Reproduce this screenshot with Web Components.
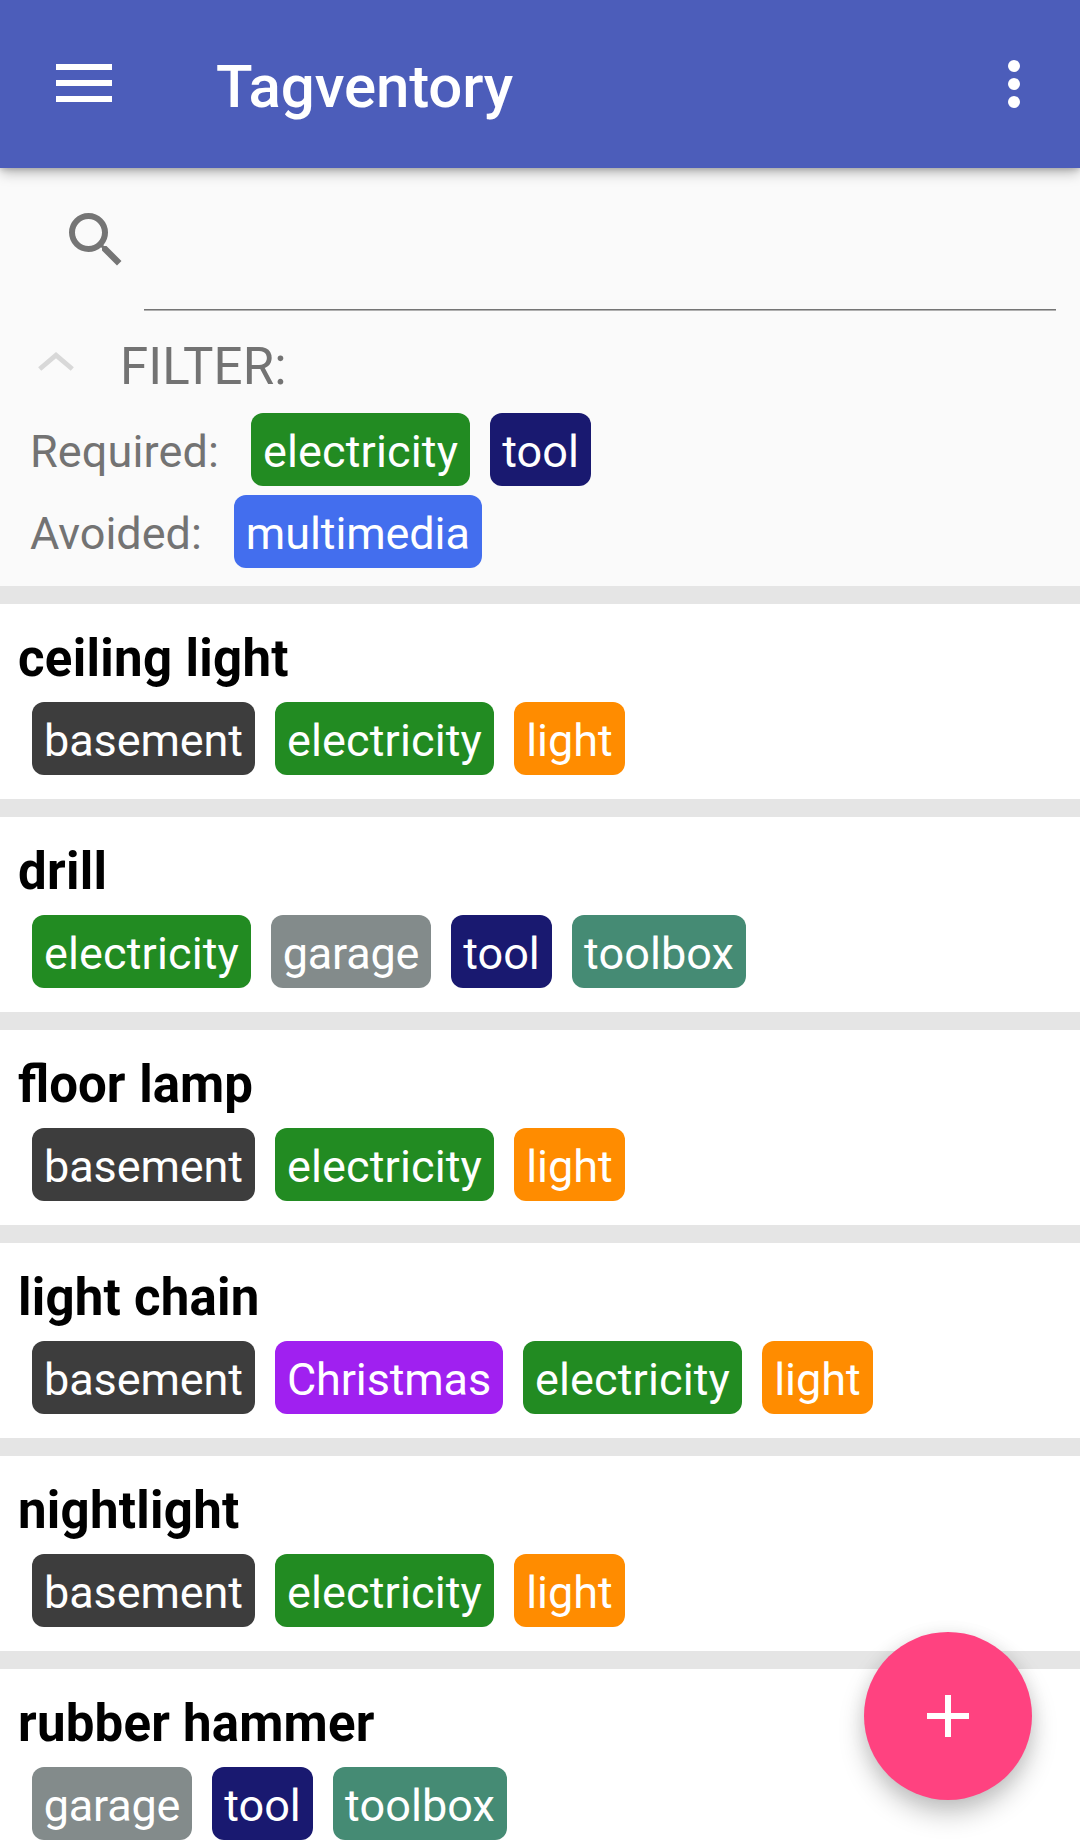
<!DOCTYPE html>
<html lang="en">
<head>
<meta charset="utf-8">
<title>Tagventory</title>
<style>
html, body { margin: 0; height: 1848px; overflow: hidden; background: #fafafa; }
body { font-family: Roboto, "Noto Sans", sans-serif; }
</style>
</head>
<body>
<tag-inventory></tag-inventory>
<script>
const define = (name, html, setup) => {
  const template = document.createElement('template');
  template.innerHTML = html;
  customElements.define(name, class extends HTMLElement {
    constructor() {
      super();
      this.attachShadow({ mode: 'open' }).append(template.content.cloneNode(true));
    }
    connectedCallback() { if (setup) setup(this, this.shadowRoot); }
  });
};

// tag name: [colour, chip width, letter spacing]
const TAGS = {
  electricity: ['#228b22', 219, .12],
  tool: ['#191970', 101, 0],
  multimedia: ['#436eee', 248, -.1],
  basement: ['#3d3d3d', 223, -.12],
  light: ['#ff8c00', 111, 0],
  garage: ['#838b8b', 160, -.2],
  toolbox: ['#458b74', 174, .08],
  Christmas: ['#a020f0', 228, -.15]
};

define('tag-chip', `
<style>
:host { display: flex; justify-content: center; flex: none; box-sizing: border-box; height: 73px; border-radius: 12px;
  color: #fff; font-size: 45px; line-height: 77px; white-space: nowrap; }
</style>
<slot></slot>`, host => {
  const [color, width, spacing] = TAGS[host.textContent.trim()];
  host.style.background = color;
  host.style.width = width + 'px';
  host.style.letterSpacing = spacing + 'px';
});

define('app-bar', `
<style>
:host { display: flex; align-items: center; box-sizing: border-box; flex: none; height: 168px; padding: 0 48px;
  background: #4c5dba; color: #fff; position: relative; z-index: 1;
  box-shadow: 0 6px 12px -1px rgba(0,0,0,.26), 0 1px 6px rgba(0,0,0,.2); }
svg { display: block; flex: none; fill: #fff; }
h1 { flex: 1; margin: 0 0 0 96px; padding-top: 5px; font-size: 60px; font-weight: 500; line-height: 70px; letter-spacing: -.13px; }
</style>
<svg width="72" height="72" viewBox="0 0 72 72"><path d="M8 16h56v6H8zM8 32h56v6H8zM8 48h56v6H8z"/></svg>
<h1><slot></slot></h1>
<svg width="36" height="72" viewBox="0 0 36 72"><circle cx="18" cy="18" r="6"/><circle cx="18" cy="36" r="6"/><circle cx="18" cy="54" r="6"/></svg>`);

define('search-field', `
<style>
:host { display: flex; flex: none; height: 143px; padding: 0 24px 0 60px; align-items: stretch; }
svg { flex: none; margin-top: 36px; fill: #757575; }
.field { flex: 1; margin-left: 12px; box-sizing: border-box; border-bottom: 1px solid #b0b0b0; box-shadow: inset 0 -1px #757575; }
</style>
<svg width="72" height="72" viewBox="0 0 24 24"><path d="M15.5 14h-.79l-.28-.27A6.471 6.471 0 0 0 16 9.5 6.5 6.5 0 1 0 9.5 16c1.61 0 3.09-.59 4.23-1.57l.27.28v.79l5 4.99L20.49 19l-4.99-5zm-6 0C7.01 14 5 11.99 5 9.5S7.01 5 9.5 5 14 7.01 14 9.5 11.99 14 9.5 14z"/></svg>
<div class="field"></div>`);

define('filter-row', `
<style>
:host { display: flex; gap: 20px; padding-left: 30px; height: 73px; }
.label { margin-right: 12px; font-size: 45px; line-height: 77px; }
</style>
<span class="label"><slot name="label"></slot></span><slot></slot>`);

define('filter-panel', `
<style>
:host { display: flex; flex: none; flex-direction: column; color: #737373; height: 275px; box-sizing: border-box; padding-top: 26px; }
header { display: flex; height: 60px; margin-bottom: 16px; font-size: 51px; line-height: 60px; letter-spacing: .12px; }
svg { flex: none; width: 60px; height: 60px; margin: 0 34px 0 26px; }
.rows { display: flex; flex-direction: column; gap: 9px; }
</style>
<header><svg viewBox="0 0 60 60"><path d="M13.7 32 30 18.1 46.3 32" fill="none" stroke="#d8d8d8" stroke-width="4.8"/></svg><slot name="title"></slot></header>
<div class="rows"><slot></slot></div>`);

define('inventory-item', `
<style>
:host { display: block; box-sizing: border-box; height: 213px; flex: none; border-top: 18px solid #e5e5e5; background: #fff; padding-top: 24px; }
h2 { margin: 0 0 13px 18px; font-size: 51px; line-height: 61px; font-weight: 700; color: #000; font-variant-ligatures: common-ligatures; }
.tags { display: flex; gap: 20px; padding-left: 32px; }
</style>
<h2></h2><div class="tags"><slot></slot></div>`,
(host, root) => {
  const title = root.querySelector('h2');
  title.textContent = host.getAttribute('name');
  // Word spacing leaves the "fl" ligature intact, letter spacing would split it.
  if (title.textContent.startsWith('fl')) title.style.wordSpacing = '1px';
  else title.style.letterSpacing = host.getAttribute('spacing') + 'px';
});

define('add-button', `
<style>
:host { position: absolute; right: 48px; bottom: 48px; width: 168px; height: 168px; border-radius: 50%; background: #ff4280;
  box-shadow: 0 14px 26px rgba(0,0,0,.22), 0 2px 18px rgba(0,0,0,.08); }
svg { display: block; fill: #fff; }
</style>
<svg width="168" height="168"><path d="M81 63h6v18h18v6H87v18h-6V87H63v-6h18z"/></svg>`);

define('tag-inventory', `
<style>
:host { display: flex; flex-direction: column; position: relative; width: 1080px; height: 1848px; overflow: hidden; background: #fafafa; }
</style>
<app-bar>Tagventory</app-bar>
<search-field></search-field>
<filter-panel>
  <span slot="title">FILTER:</span>
  <filter-row><span slot="label" style="letter-spacing:.13px">Required:</span><tag-chip>electricity</tag-chip><tag-chip>tool</tag-chip></filter-row>
  <filter-row><span slot="label">Avoided:</span><tag-chip>multimedia</tag-chip></filter-row>
</filter-panel>
${[
  ['ceiling light', .3, 'basement', 'electricity', 'light'],
  ['drill', .25, 'electricity', 'garage', 'tool', 'toolbox'],
  ['floor lamp', 0, 'basement', 'electricity', 'light'],
  ['light chain', .22, 'basement', 'Christmas', 'electricity', 'light'],
  ['nightlight', .25, 'basement', 'electricity', 'light'],
  ['rubber hammer', .2, 'garage', 'tool', 'toolbox']
].map(([name, spacing, ...tags]) => `<inventory-item name="${name}" spacing="${spacing}">${tags.map(t => `<tag-chip>${t}</tag-chip>`).join('')}</inventory-item>`).join('')}
<add-button></add-button>`);
</script>
</body>
</html>
